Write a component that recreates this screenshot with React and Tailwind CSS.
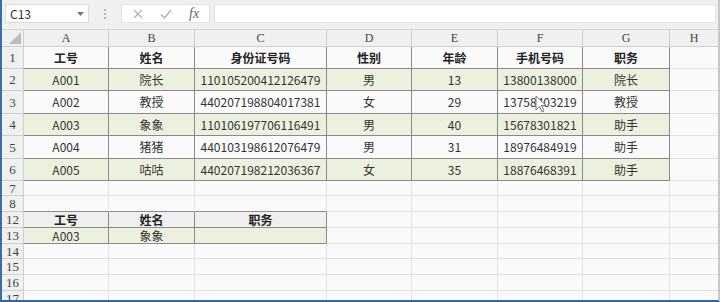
import React from 'react';

const W = ['w-[85px]', 'w-[86px]', 'w-[132px]', 'w-[85px]', 'w-[86px]', 'w-[85px]', 'w-[87px]'];
const LETTERS = ['A', 'B', 'C', 'D', 'E', 'F', 'G'];

const DATA = [
  ['A001', '院长', '110105200412126479', '男', '13', '13800138000', '院长'],
  ['A002', '教授', '440207198804017381', '女', '29', '13758403219', '教授'],
  ['A003', '象象', '110106197706116491', '男', '40', '15678301821', '助手'],
  ['A004', '猪猪', '440103198612076479', '男', '31', '18976484919', '助手'],
  ['A005', '咕咕', '440207198212036367', '女', '35', '18876468391', '助手'],
];

const HEAD = ['工号', '姓名', '身份证号码', '性别', '年龄', '手机号码', '职务'];

const ROW_H = {
  1: 'h-[22px]', 2: 'h-[22px]', 3: 'h-[23px]', 4: 'h-[22px]', 5: 'h-[23px]', 6: 'h-[22px]',
  7: 'h-[15px]', 8: 'h-[16px]', 12: 'h-[16px]', 13: 'h-[16px]', 14: 'h-[15px]', 15: 'h-[16px]',
  16: 'h-[16px]', 17: 'h-[16px]',
};

const font = { fontFamily: '"Noto Sans CJK SC", "Noto Sans", sans-serif' };
const serif = { fontFamily: '"Liberation Serif", "DejaVu Serif", serif' };

// one spreadsheet cell
const Cell = ({ w, right, bottom, bg = '', bold, children }) => (
  <div
    className={`${w} shrink-0 h-full flex items-center justify-center border-r border-b text-[12px] leading-none ${
      right ? 'border-r-[#8a8a8a]' : 'border-r-[#e2e2e2]'
    } ${bottom ? 'border-b-[#8a8a8a]' : 'border-b-[#e2e2e2]'} ${bg} ${
      bold ? 'font-bold text-[#222]' : 'text-[#333]'
    }`}
    style={font}
  >
    {children}
  </div>
);

const RowHead = ({ n }) => (
  <div
    className="w-[22px] shrink-0 h-full flex items-center justify-center bg-[#f0f0f0] border-r border-b border-[#cfcfcf] text-[13px] text-[#444] leading-none"
    style={serif}
  >
    {n}
  </div>
);

const Row = ({ n, children }) => (
  <div className={`flex ${ROW_H[n]} shrink-0`}>
    <RowHead n={n} />
    {children}
    <div className="flex-1 h-full border-b border-[#e2e2e2]" />
  </div>
);

const EmptyRow = ({ n, bottomTable = false }) => (
  <Row n={n}>
    {W.map((w, i) => (
      <Cell key={i} w={w} bottom={bottomTable && i < 3} />
    ))}
  </Row>
);

const Toolbar = () => (
  <div className="h-[30px] shrink-0 bg-[#f0f0f0] flex items-start pt-[4px] pl-[3px] pr-[2px] gap-[4px] border-b border-[#d6d6d6]">
    <div className="w-[84px] h-[19px] bg-white border border-[#dcdcdc] flex items-center justify-between pl-[4px] pr-[4px]">
      <span className="text-[12px] text-[#333]" style={font}>C13</span>
      <svg width="7" height="4" viewBox="0 0 7 4"><path d="M0 0h7L3.5 4z" fill="#777" /></svg>
    </div>
    <div className="w-[24px] h-[19px] flex flex-col items-center justify-center gap-[2px]">
      <span className="w-[2px] h-[2px] bg-[#b5b5b5]" />
      <span className="w-[2px] h-[2px] bg-[#b5b5b5]" />
      <span className="w-[2px] h-[2px] bg-[#b5b5b5]" />
    </div>
    <div className="w-[89px] h-[19px] bg-white border border-[#e2e2e2] flex items-center pl-[11px] gap-[17px]">
      <svg width="10" height="10" viewBox="0 0 10 10"><path d="M1 1l8 8M9 1l-8 8" stroke="#b0b0b0" strokeWidth="1.2" /></svg>
      <svg width="12" height="10" viewBox="0 0 12 10"><path d="M1 5.5l3.5 3.5L11 1" stroke="#b0b0b0" strokeWidth="1.3" fill="none" /></svg>
      <span className="italic text-[14px] text-[#666] leading-none" style={serif}>fx</span>
    </div>
    <div className="flex-1 h-[19px] bg-white border border-[#e2e2e2]" />
  </div>
);

const ColHeader = () => (
  <div className="flex h-[17px] shrink-0 bg-[#f0f0f0]">
    <div className="w-[22px] shrink-0 h-full border-r border-b border-[#cfcfcf] flex items-end justify-end p-[2px]">
      <svg width="12" height="12" viewBox="0 0 12 12"><path d="M12 0V12H0z" fill="#bdbdbd" /></svg>
    </div>
    {W.map((w, i) => (
      <div
        key={i}
        className={`${w} shrink-0 h-full border-r border-b border-[#cfcfcf] flex items-center justify-center text-[12px] text-[#444] leading-none`}
        style={serif}
      >
        {LETTERS[i]}
      </div>
    ))}
    <div
      className="flex-1 h-full border-b border-[#cfcfcf] flex items-center justify-center text-[12px] text-[#444] leading-none"
      style={serif}
    >
      H
    </div>
  </div>
);

export default function App() {
  return (
    <div className="w-[720px] h-[302px] overflow-hidden bg-[#fafafa] flex flex-col border-l-2 border-b-2 border-l-[#3a6ea5] border-b-[#2f66a3] border-r-2 border-r-[#c8c8c8] relative">
      <Toolbar />
      <ColHeader />

      <Row n={1}>
        {HEAD.map((t, i) => (
          <Cell key={i} w={W[i]} right bottom bold>{t}</Cell>
        ))}
      </Row>
      {DATA.map((r, ri) => (
        <Row key={ri} n={ri + 2}>
          {r.map((t, i) => (
            <Cell key={i} w={W[i]} right bottom bg={ri % 2 === 0 ? 'bg-[#ebf1de]' : ''}>
              {t}
            </Cell>
          ))}
        </Row>
      ))}

      <EmptyRow n={7} />
      <EmptyRow n={8} bottomTable />

      <Row n={12}>
        {['工号', '姓名', '职务'].map((t, i) => (
          <Cell key={i} w={W[i]} right bottom bold bg="bg-[#efefef]">{t}</Cell>
        ))}
        {W.slice(3).map((w, i) => (
          <Cell key={i} w={w} />
        ))}
      </Row>
      <Row n={13}>
        {['A003', '象象', ''].map((t, i) => (
          <Cell key={i} w={W[i]} right bottom bg="bg-[#ebf1de]">{t}</Cell>
        ))}
        {W.slice(3).map((w, i) => (
          <Cell key={i} w={w} />
        ))}
      </Row>
      <EmptyRow n={14} />
      <EmptyRow n={15} />
      <EmptyRow n={16} />
      <EmptyRow n={17} />

      {/* mouse pointer */}
      <svg className="absolute left-[533px] top-[95px]" width="12" height="18" viewBox="0 0 12 18">
        <path d="M1 1v14l3.5-3.5 2.5 5.5 2-1-2.5-5.5H11z" fill="#fff" stroke="#777" strokeWidth="1" strokeLinejoin="round" />
      </svg>
    </div>
  );
}
